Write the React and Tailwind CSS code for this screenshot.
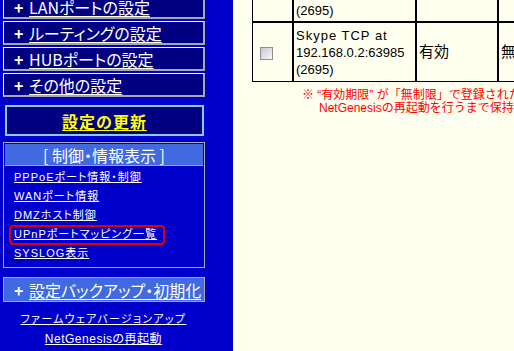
import React from 'react';

const menu = ['LANポートの設定', 'ルーティングの設定', 'HUBポートの設定', 'その他の設定'];

const infoLinks = [
  'PPPoEポート情報・制御',
  'WANポート情報',
  'DMZホスト制御',
  'UPnPポートマッピング一覧',
  'SYSLOG表示',
];

const jp = "[font-family:'Noto_Sans_CJK_JP',sans-serif] [font-feature-settings:'palt']";
const sans = "[font-family:'Liberation_Sans','Noto_Sans_CJK_JP',sans-serif]";

function MenuBox({ label }) {
  return (
    <div className="ml-[3px] w-[202px] h-[24px] flex items-center bg-[#000080] border-t border-l border-white border-b-2 border-r-2 border-b-[#a8a8a8] border-r-[#a8a8a8] text-white text-[16px] leading-none">
      <span className="ml-[10px] w-[15px] font-bold">+</span>
      <span className="underline underline-offset-2">{label}</span>
    </div>
  );
}

function SideBar() {
  return (
    <div className={`w-[233px] shrink-0 h-full bg-[#0000cc] ${jp}`}>
      <div className="mt-[-5px] flex flex-col gap-[2px]">
        {menu.map((m) => (
          <MenuBox key={m} label={m} />
        ))}
      </div>

      <div className="mt-[8px] ml-[5px] w-[199px] h-[31px] flex items-center justify-center bg-[#000080] border-2 border-[#87cefa]">
        <span className="text-[#ffff00] font-bold text-[16px] tracking-[1px] underline underline-offset-2">設定の更新</span>
      </div>

      <div className="mt-[6px] ml-[3px] w-[202px] h-[126px] border border-[#a8a8a8] p-[1px]">
        <div className="h-[22px] bg-[#4169e1] border-b border-[#a8a8a8] flex items-center justify-center text-white text-[16px] leading-none">
          [ 制御・情報表示 ]
        </div>
        <div className={`pt-[2px] pl-[9px] ${sans} text-[11px] tracking-[1px] text-white`}>
          {infoLinks.map((l) => (
            <div key={l} className="relative h-[19px] flex items-center">
              <span className="underline">{l}</span>
              {l.startsWith('UPnP') && (
                <span className="absolute left-[-5px] top-[0px] w-[156px] h-[20px] border-2 border-[#e00000] rounded-[4px]" />
              )}
            </div>
          ))}
        </div>
      </div>

      <div className="mt-[9px] ml-[3px] w-[202px] h-[25px] flex items-center bg-[#4169e1] border border-[#a8a8a8] text-white text-[16px] leading-none">
        <span className="ml-[10px] w-[15px] font-bold">+</span>
        <span className="underline underline-offset-2">設定バックアップ・初期化</span>
      </div>

      <div className={`mt-[8px] w-[207px] flex flex-col items-center ${sans} text-white`}>
        <div className="h-[19px] flex items-center text-[11px] tracking-[1.3px] underline">ファームウェアバージョンアップ</div>
        <div className="h-[19px] flex items-center text-[12px] tracking-[0.5px] underline">NetGenesisの再起動</div>
      </div>
    </div>
  );
}

function Content() {
  return (
    <div className={`flex-1 h-full bg-[#fffff0] ${sans} text-black overflow-hidden`}>
      <div className="ml-[19px] w-[400px] border-l border-b border-black">
        <div className="flex h-[21px]">
          <div className="w-[39px]" />
          <div className="w-[2px] bg-black" />
          <div className="w-[121px] pl-[2px] flex items-center text-[13px] leading-[17px]">(2695)</div>
          <div className="w-[2px] bg-black" />
          <div className="w-[80px]" />
          <div className="w-[2px] bg-black" />
          <div className="flex-1" />
        </div>
        <div className="h-[2px] bg-black" />
        <div className="flex h-[58px]">
          <div className="w-[39px] flex items-center">
            <div className="ml-[7px] mt-[3px] w-[13px] h-[13px] border border-[#8f8f8f] bg-gradient-to-br from-[#c8c8d4] to-[#f8f8f8]" />
          </div>
          <div className="w-[2px] bg-black" />
          <div className="w-[121px] pl-[2px] flex flex-col justify-center text-[13px] leading-[17px] whitespace-nowrap">
            <div className="tracking-[1px]">Skype TCP at</div>
            <div>192.168.0.2:63985</div>
            <div>(2695)</div>
          </div>
          <div className="w-[2px] bg-black" />
          <div className="w-[80px] pl-[2px] flex items-center text-[15px]">有効</div>
          <div className="w-[2px] bg-black" />
          <div className="flex-1 pl-[2px] flex items-center text-[15px]">無制限</div>
        </div>
      </div>
      <div className="mt-[7px] text-[#ff0000] text-[12px] leading-[13px] whitespace-nowrap">
        <div className="ml-[69px]">※ “有効期限” が「無制限」で登録されたエントリは、</div>
        <div className="ml-[86px]">NetGenesisの再起動を行うまで保持されます。</div>
      </div>
    </div>
  );
}

export default function App() {
  return (
    <div className="w-[514px] h-[351px] flex overflow-hidden">
      <SideBar />
      <Content />
    </div>
  );
}
